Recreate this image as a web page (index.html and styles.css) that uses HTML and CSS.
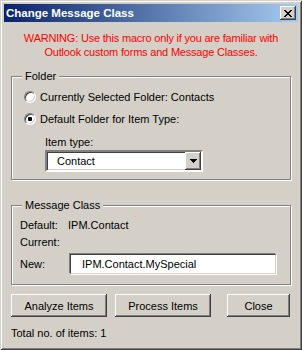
FILE: index.html
```html
<!DOCTYPE html>
<html lang="en">
<head>
  <meta charset="UTF-8">
  <title>Change Message Class</title>
  <link rel="stylesheet" href="styles.css">
</head>
<body>
  <div class="window">
    <header class="titlebar">
      <span class="title">Change Message Class</span>
      <span class="close-btn">
        <svg width="8" height="7" viewBox="0 0 8 7" shape-rendering="crispEdges">
          <path fill="#000" d="M0 0h2v1H0zM6 0h2v1H6zM1 1h2v1H1zM5 1h2v1H5zM2 2h4v1H2zM3 3h2v1H3zM2 4h4v1H2zM1 5h2v1H1zM5 5h2v1H5zM0 6h2v1H0zM6 6h2v1H6z"/>
        </svg>
      </span>
    </header>

    <section class="dialog-body">
      <p class="warning">WARNING: Use this macro only if you are familiar with<br>Outlook custom forms and Message Classes.</p>

      <fieldset class="group group-folder">
        <legend>Folder</legend>
        <div class="radio-row"><span class="radio-btn"></span>Currently Selected Folder: Contacts</div>
        <div class="radio-row"><span class="radio-btn checked"></span>Default Folder for Item Type:</div>
        <div class="item-type">
          <div class="field-label">Item type:</div>
          <div class="combo">
            <span class="combo-text">Contact</span>
            <span class="combo-btn">
              <svg width="7" height="4" viewBox="0 0 7 4" shape-rendering="crispEdges">
                <path fill="#000" d="M0 0h7v1H0zM1 1h5v1H1zM2 2h3v1H2zM3 3h1v1H3z"/>
              </svg>
            </span>
          </div>
        </div>
      </fieldset>

      <fieldset class="group group-class">
        <legend>Message Class</legend>
        <div class="class-row row-default"><span class="class-label">Default:</span><span>IPM.Contact</span></div>
        <div class="class-row row-current"><span class="class-label">Current:</span><span></span></div>
        <div class="class-row row-new">
          <span class="class-label">New:</span>
          <div class="textbox">IPM.Contact.MySpecial</div>
        </div>
      </fieldset>

      <div class="button-row">
        <button class="btn btn-analyze">Analyze Items</button>
        <button class="btn btn-process">Process Items</button>
        <button class="btn btn-close">Close</button>
      </div>

      <p class="total">Total no. of items: 1</p>
    </section>
  </div>
</body>
</html>
```

FILE: styles.css
```css
/* Reset */
* {
    box-sizing: border-box;
}

body, p, fieldset, legend, button {
    margin: 0;
    padding: 0;
}

body {
    font-family: "Liberation Sans", Arial, sans-serif;
    font-size: 11px;
    line-height: 14px;
    color: #000;
    background-color: #d4d0c8;
}

/* Window frame */
.window {
    width: 302px;
    height: 350px;
    padding: 4px;
    background-color: #d4d0c8;
    box-shadow: inset 1px 1px #d4d0c8, inset -1px -1px #404040,
                inset 2px 2px #ffffff, inset -2px -2px #808080;
}

.titlebar {
    height: 18px;
    display: flex;
    align-items: center;
    justify-content: space-between;
    padding: 0 2px 0 2px;
    background: linear-gradient(to right, #0a246a, #a6caf0);
    color: #ffffff;
}

.title {
    font-weight: bold;
    font-size: 11.5px;
}

.close-btn {
    width: 16px;
    height: 14px;
    display: flex;
    align-items: center;
    justify-content: center;
    background-color: #d4d0c8;
    box-shadow: inset -1px -1px #404040, inset 1px 1px #ffffff,
                inset -2px -2px #808080;
}

.close-btn svg {
    display: block;
}

/* Dialog content */
.dialog-body {
    padding: 9px 7px 0;
}

.warning {
    color: #ff0000;
    text-align: center;
    letter-spacing: -0.2px;
}

.group {
    margin-top: 10px;
    border: 1px solid #808080;
    box-shadow: 1px 1px #ffffff, inset 1px 1px #ffffff;
    padding: 0 8px;
    min-width: 0;
}

.group legend {
    margin-left: 2px;
    padding: 0 3px;
    background-color: #d4d0c8;
    line-height: 14px;
}

.group-folder {
    padding-top: 3px;
    padding-bottom: 7px;
}

.radio-row {
    height: 22px;
    display: flex;
    align-items: center;
    gap: 4px;
    margin-left: 4px;
}

.radio-btn {
    position: relative;
    width: 12px;
    height: 12px;
    border-radius: 50%;
    background-color: #ffffff;
    border: 1px solid;
    border-color: #808080 #ffffff #ffffff #808080;
    box-shadow: inset 1px 1px #404040, inset -1px -1px #d4d0c8;
}

.radio-btn.checked::after {
    content: "";
    position: absolute;
    left: 3px;
    top: 3px;
    width: 4px;
    height: 4px;
    border-radius: 1px;
    background-color: #000;
}

.item-type {
    margin: 5px 0 0 25px;
}

.combo {
    margin-top: 1px;
    width: 158px;
    height: 22px;
    display: flex;
    align-items: center;
    justify-content: space-between;
    background-color: #ffffff;
    border: 2px solid;
    border-color: #808080 #ffffff #ffffff #808080;
    box-shadow: inset 1px 1px #404040, inset -1px -1px #d4d0c8;
    padding: 0 0 0 10px;
}

.combo-btn {
    width: 16px;
    height: 18px;
    display: flex;
    align-items: center;
    justify-content: center;
    background-color: #d4d0c8;
    box-shadow: inset -1px -1px #404040, inset 1px 1px #ffffff,
                inset -2px -2px #808080;
}

.combo-btn svg {
    display: block;
}

.group-class {
    margin-top: 18px;
    padding-top: 6px;
    padding-bottom: 10px;
}

.class-row {
    display: flex;
    align-items: center;
}

.class-label {
    width: 48px;
}

.row-current {
    margin-top: 3px;
    height: 14px;
}

.row-new {
    margin-top: 5px;
}

.textbox {
    margin-left: 2px;
    width: 206px;
    height: 20px;
    padding: 2px 0 0 11px;
    background-color: #ffffff;
    border-top: 1px solid #404040;
    border-left: 1px solid #404040;
    border-right: 1px solid #d4d0c8;
    border-bottom: 1px solid #d4d0c8;
    box-shadow: -1px -1px #808080, 1px 1px #ffffff;
}

/* Buttons */
.button-row {
    display: flex;
    margin-top: 9px;
}

.btn {
    height: 23px;
    font-family: inherit;
    font-size: 11px;
    color: #000;
    background-color: #d4d0c8;
    border: none;
    box-shadow: inset -1px -1px #404040, inset 1px 1px #ffffff,
                inset -2px -2px #808080;
}

.btn-analyze {
    width: 96px;
}

.btn-process {
    width: 96px;
    margin-left: 8px;
}

.btn-close {
    width: 63px;
    margin-left: 16px;
}

.total {
    margin-top: 9px;
}
```
